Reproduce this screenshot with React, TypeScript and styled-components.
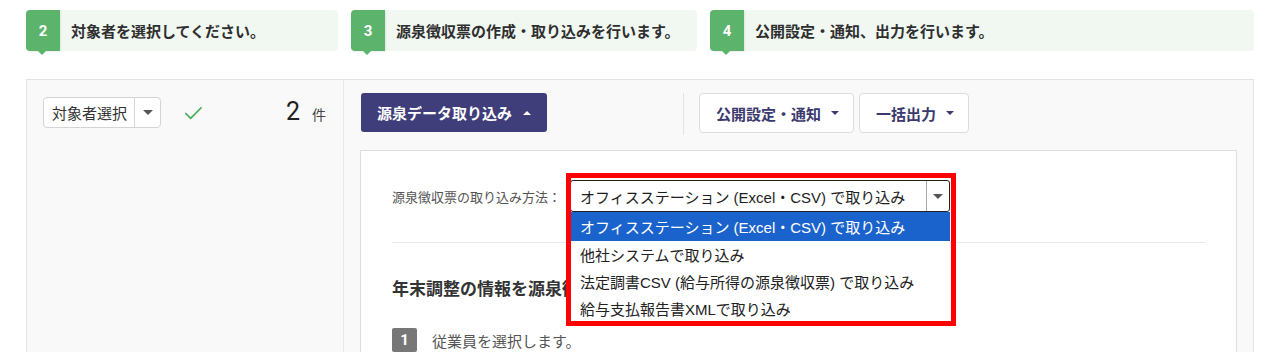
import styled, { createGlobalStyle } from "styled-components";
import { Check } from "lucide-react";

const GlobalStyle = createGlobalStyle`
  html, body {
    margin: 0;
    padding: 0;
    background: #fff;
    overflow: hidden;
    font-family: "Liberation Sans", "Noto Sans CJK JP", sans-serif;
    color: #333;
  }
`;

const steps = [
  { no: 2, text: "対象者を選択してください。", width: "312px" },
  { no: 3, text: "源泉徴収票の作成・取り込みを行います。", width: "346px" },
  { no: 4, text: "公開設定・通知、出力を行います。", width: "auto" },
];

const methods = [
  "オフィスステーション (Excel・CSV) で取り込み",
  "他社システムで取り込み",
  "法定調書CSV (給与所得の源泉徴収票) で取り込み",
  "給与支払報告書XMLで取り込み",
];

function App() {
  return (
    <Page>
      <GlobalStyle />
      <StepRow>
        {steps.map((s) => (
          <Step key={s.no} $width={s.width}>
            <StepBadge>{s.no}</StepBadge>
            <StepText>{s.text}</StepText>
          </Step>
        ))}
      </StepRow>

      <Panel>
        <LeftCol>
          <SelectBox>
            <SelectLabel>対象者選択</SelectLabel>
            <SelectCaret>
              <Caret />
            </SelectCaret>
          </SelectBox>
          <Check size={23} color="#4cae5a" strokeWidth={1.8} />
          <Count>
            2<small>件</small>
          </Count>
        </LeftCol>

        <RightCol>
          <Toolbar>
            <ToolGroup>
              <PrimaryButton>
                源泉データ取り込み <UpCaret />
              </PrimaryButton>
            </ToolGroup>
            <ToolGroup $divided>
              <GhostButton>
                公開設定・通知 <DownCaret />
              </GhostButton>
              <GhostButton>
                一括出力 <DownCaret />
              </GhostButton>
            </ToolGroup>
          </Toolbar>

          <Card>
            <MethodRow>
              <MethodLabel>源泉徴収票の取り込み方法：</MethodLabel>
              <MethodPicker>
                <MethodSelect>
                  <MethodValue>{methods[0]}</MethodValue>
                  <MethodCaret>
                    <Caret />
                  </MethodCaret>
                </MethodSelect>
                <OptionList>
                  {methods.map((m, i) => (
                    <OptionItem key={m} $active={i === 0}>
                      {m}
                    </OptionItem>
                  ))}
                </OptionList>
                <Highlight />
              </MethodPicker>
            </MethodRow>
            <Divider />
            <Heading>年末調整の情報を源泉徴収票へ</Heading>
            <Instruction>
              <NumBadge>1</NumBadge>
              <span>従業員を選択します。</span>
            </Instruction>
          </Card>
        </RightCol>
      </Panel>
    </Page>
  );
}

const Page = styled.div`
  padding: 10px 26px 0;
`;

const StepRow = styled.div`
  display: flex;
  gap: 13px;
`;

const Step = styled.div<{ $width: string }>`
  flex: ${(p) => (p.$width === "auto" ? "1 1 auto" : `0 0 ${p.$width}`)};
  height: 41px;
  display: flex;
  align-items: center;
  background: #f1f8f2;
  border-radius: 4px;
`;

const StepBadge = styled.div`
  position: relative;
  width: 34px;
  height: 41px;
  flex: 0 0 34px;
  display: flex;
  align-items: center;
  justify-content: center;
  background: #5cb36b;
  color: #fff;
  font-family: Roboto, "Liberation Sans", sans-serif;
  font-weight: 700;
  font-size: 15px;
  border-radius: 4px 0 0 4px;
  box-shadow: 1px 1px 2px rgba(0, 0, 0, 0.08);

  &::after {
    content: "";
    position: absolute;
    left: 12px;
    bottom: -4px;
    border-left: 4px solid transparent;
    border-right: 4px solid transparent;
    border-top: 4px solid #5cb36b;
  }
`;

const StepText = styled.span`
  padding-left: 11px;
  font-size: 15px;
  font-weight: 700;
  color: #2f2f2f;
`;

const Panel = styled.div`
  margin-top: 28px;
  display: grid;
  grid-template-columns: 317px 1fr;
  height: 320px;
  background: #f9f9f9;
  border: 1px solid #e3e3e3;
  border-bottom: 0;
`;

const LeftCol = styled.div`
  display: flex;
  align-items: flex-start;
  gap: 21px;
  padding: 17px 17px 0 16px;
  border-right: 1px solid #e8e8e8;

  svg {
    margin-top: 5px;
  }
`;

const SelectBox = styled.div`
  display: flex;
  height: 31px;
  background: #fff;
  border: 1px solid #d4d4d4;
  border-radius: 4px;
  box-sizing: border-box;
`;

const SelectLabel = styled.span`
  display: flex;
  align-items: center;
  padding: 0 7px 0 8px;
  font-size: 15px;
  color: #333;
`;

const SelectCaret = styled.span`
  width: 25px;
  display: flex;
  align-items: center;
  justify-content: center;
  border-left: 1px solid #d4d4d4;
`;

const Caret = styled.span`
  width: 0;
  height: 0;
  border-left: 5px solid transparent;
  border-right: 5px solid transparent;
  border-top: 5px solid #555;
`;

const Count = styled.div`
  margin-left: auto;
  margin-top: 0;
  font-family: Roboto, "Liberation Sans", sans-serif;
  font-size: 25px;
  font-weight: 400;
  color: #222;

  small {
    margin-left: 12px;
    font-family: "Noto Sans CJK JP", sans-serif;
    font-size: 14px;
    color: #444;
  }
`;

const RightCol = styled.div`
  padding: 13px 16px 0;
`;

const Toolbar = styled.div`
  display: flex;
  align-items: center;
  height: 42px;
`;

const ToolGroup = styled.div<{ $divided?: boolean }>`
  display: flex;
  align-items: center;
  gap: 5px;
  height: 42px;
  ${(p) =>
    p.$divided
      ? `border-left: 1px solid #e3e3e3; padding-left: 15px;`
      : `width: 322px; padding-left: 1px;`}
`;

const PrimaryButton = styled.button`
  height: 39px;
  align-self: flex-start;
  padding: 0 16px;
  display: flex;
  align-items: center;
  gap: 11px;
  background: #3f3d7a;
  color: #fff;
  border: 0;
  border-radius: 3px;
  font-family: "Noto Sans CJK JP", sans-serif;
  font-size: 15px;
  font-weight: 700;
`;

const GhostButton = styled.button`
  height: 40px;
  align-self: flex-start;
  padding: 0 14px 0 16px;
  display: flex;
  align-items: center;
  gap: 10px;
  background: #fff;
  color: #3b3a6e;
  border: 1px solid #dcdcdc;
  border-radius: 4px;
  font-family: "Noto Sans CJK JP", sans-serif;
  font-size: 15px;
  font-weight: 700;
`;

const UpCaret = styled.span`
  border-left: 4px solid transparent;
  border-right: 4px solid transparent;
  border-bottom: 4px solid #fff;
`;

const DownCaret = styled.span`
  border-left: 4px solid transparent;
  border-right: 4px solid transparent;
  border-top: 4px solid #3b3a6e;
`;

const Card = styled.div`
  margin-top: 15px;
  height: 240px;
  padding: 29px 31px 0;
  background: #fff;
  border: 1px solid #dedede;
  border-bottom: 0;
`;

const MethodRow = styled.div`
  display: flex;
  align-items: center;
  gap: 9px;
`;

const MethodLabel = styled.span`
  font-family: "Noto Sans CJK JP", sans-serif;
  font-size: 13px;
  color: #555;
`;

const MethodPicker = styled.div`
  position: relative;
  width: 380px;
`;

const MethodSelect = styled.div`
  display: flex;
  height: 32px;
  box-sizing: border-box;
  border: 1px solid #222;
  border-radius: 3px;
  background: #fff;
`;

const MethodValue = styled.span`
  flex: 1;
  display: flex;
  align-items: center;
  padding-left: 9px;
  font-size: 15px;
  color: #1e1e1e;
`;

const MethodCaret = styled.span`
  width: 22px;
  display: flex;
  align-items: center;
  justify-content: center;
  border-left: 1px solid #aaa;
`;

const OptionList = styled.ul`
  position: absolute;
  top: 32px;
  left: 0;
  right: 0;
  margin: 0;
  padding: 0;
  list-style: none;
  background: #fff;
  z-index: 2;
`;

const OptionItem = styled.li<{ $active?: boolean }>`
  height: ${(p) => (p.$active ? "29px" : "27px")};
  display: flex;
  align-items: center;
  padding-left: 10px;
  font-size: 15px;
  color: ${(p) => (p.$active ? "#fff" : "#222")};
  background: ${(p) => (p.$active ? "#1b63cc" : "#fff")};
`;

const Highlight = styled.div`
  position: absolute;
  top: -7px;
  left: -4px;
  right: -6px;
  height: 153px;
  border: 5px solid #f00;
  box-sizing: border-box;
  z-index: 3;
  pointer-events: none;
`;

const Divider = styled.div`
  margin-top: 30px;
  height: 1px;
  background: #e8e8e8;
`;

const Heading = styled.h2`
  margin: 33px 0 0;
  font-family: "Noto Sans CJK JP", sans-serif;
  font-size: 17px;
  line-height: 24px;
  font-weight: 700;
  color: #333;
`;

const Instruction = styled.div`
  margin-top: 28px;
  display: flex;
  align-items: center;
  gap: 15px;
  font-family: "Noto Sans CJK JP", sans-serif;
  font-size: 15px;
  color: #555;
`;

const NumBadge = styled.span`
  width: 25px;
  height: 24px;
  display: flex;
  align-items: center;
  justify-content: center;
  background: #777;
  color: #fff;
  border-radius: 2px;
  font-family: Roboto, "Liberation Sans", sans-serif;
  font-weight: 700;
  font-size: 15px;
`;

export default App;
